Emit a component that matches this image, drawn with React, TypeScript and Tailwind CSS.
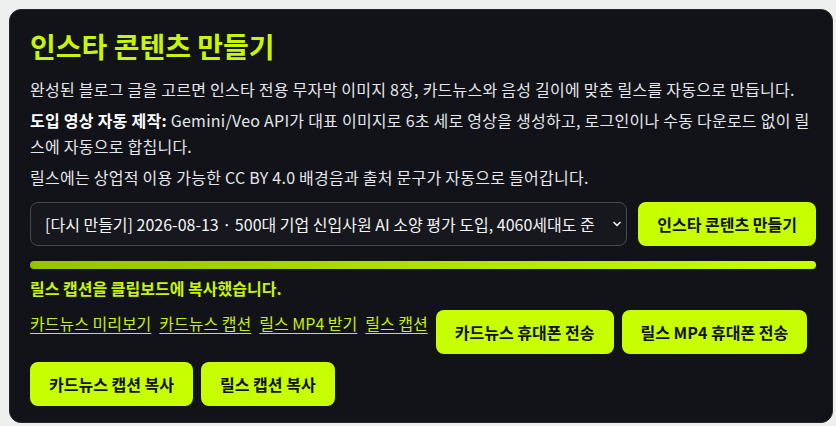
import { ChevronDown } from 'lucide-react';

const font = { fontFamily: '"Noto Sans CJK KR", "Noto Sans", sans-serif' };

const ActionButton = ({ label }: { label: string }) => (
  <button
    type="button"
    className="h-11 shrink-0 rounded-lg bg-[#c8ff00] px-[19px] text-base font-bold text-[#111111]"
  >
    {label}
  </button>
);

const links = ['카드뉴스 미리보기', '카드뉴스 캡션', '릴스 MP4 받기', '릴스 캡션'];

export default function App() {
  return (
    <div className="min-h-[426px] bg-[#eef0ef] pt-[9px] pl-[9px]" style={font}>
      <section className="w-[824px] rounded-xl border border-[#22252b] bg-[#111318] pt-[19px] pb-4 pl-5 pr-4 text-base leading-[26px] text-[#e5e7eb]">
        <h1 className="mb-3 text-[28px] font-bold leading-[35px] text-[#c8f500]">인스타 콘텐츠 만들기</h1>

        <div className="flex flex-col gap-[5px] tracking-[0.25px]">
          <p>완성된 블로그 글을 고르면 인스타 전용 무자막 이미지 8장, 카드뉴스와 음성 길이에 맞춘 릴스를 자동으로 만듭니다.</p>
          <p>
            <strong className="font-bold text-white">도입 영상 자동 제작:</strong> Gemini/Veo API가 대표 이미지로 6초 세로 영상을 생성하고, 로그인이나 수동 다운로드 없이 릴스에 자동으로 합칩니다.
          </p>
          <p>릴스에는 상업적 이용 가능한 CC BY 4.0 배경음과 출처 문구가 자동으로 들어갑니다.</p>
        </div>

        <div className="mt-3 flex gap-[11px]">
          <div className="relative flex-1">
            <select
              className="h-11 w-full appearance-none rounded-lg border border-[#474a51] bg-[#16181d] pl-[14px] pr-6 text-base text-[#f3f4f6] outline-none"
              style={font}
              defaultValue="a"
            >
              <option value="a">[다시 만들기] 2026-08-13 · 500대 기업 신입사원 AI 소양 평가 도입, 4060세대도 준</option>
            </select>
            <ChevronDown
              size={12}
              strokeWidth={3.5}
              className="pointer-events-none absolute right-[4px] top-1/2 -translate-y-1/2 text-[#e5e7eb]"
            />
          </div>
          <ActionButton label="인스타 콘텐츠 만들기" />
        </div>

        <div className="mt-[15px] h-2 rounded-full bg-gradient-to-r from-[#97c200] to-[#c8ff00]" />

        <p className="mt-[6px] font-bold text-[#c8f500]">릴스 캡션을 클립보드에 복사했습니다.</p>

        <div className="mt-[9px] flex flex-wrap items-start gap-2">
          {links.map((link) => (
            <a key={link} href="#" className="text-[#c8f000] underline underline-offset-[3px]">
              {link}
            </a>
          ))}
          <ActionButton label="카드뉴스 휴대폰 전송" />
          <ActionButton label="릴스 MP4 휴대폰 전송" />
          <ActionButton label="카드뉴스 캡션 복사" />
          <ActionButton label="릴스 캡션 복사" />
        </div>
      </section>
    </div>
  );
}
